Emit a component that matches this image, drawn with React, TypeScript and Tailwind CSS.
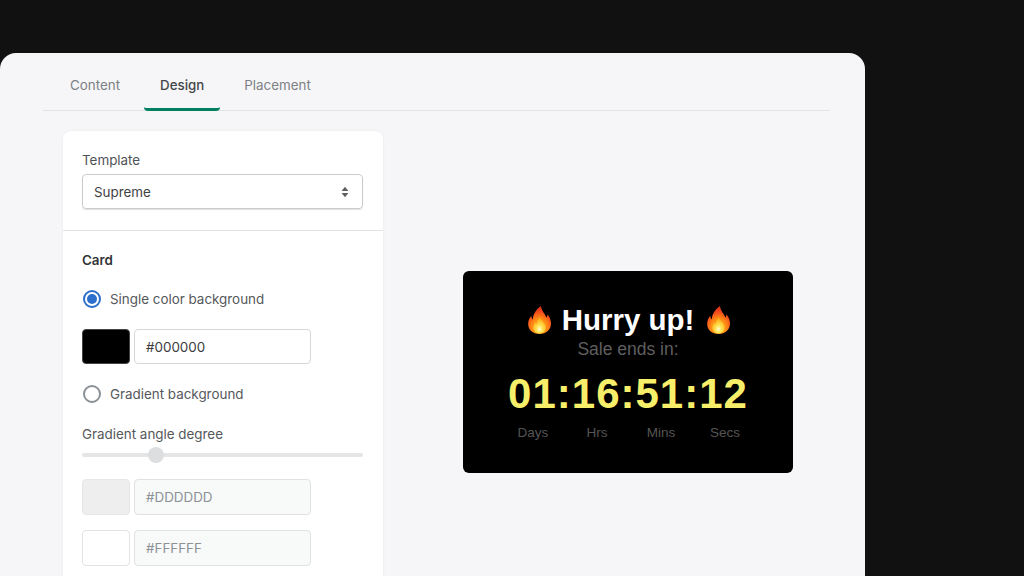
import React from 'react';

const Flame: React.FC<{ id: string; className?: string }> = ({ id, className }) => (
  <svg width="25" height="30" viewBox="0 0 26 30" preserveAspectRatio="none" className={`shrink-0 ${className ?? ''}`}>
    <defs>
      <radialGradient id={`${id}-outer`} cx="50%" cy="78%" r="75%">
        <stop offset="0%" stopColor="#ffc21f" />
        <stop offset="45%" stopColor="#ff8a14" />
        <stop offset="78%" stopColor="#f1471c" />
        <stop offset="100%" stopColor="#d92d17" />
      </radialGradient>
      <radialGradient id={`${id}-core`} cx="50%" cy="72%" r="60%">
        <stop offset="0%" stopColor="#fffde0" />
        <stop offset="35%" stopColor="#ffe65a" />
        <stop offset="100%" stopColor="#ffb21a" />
      </radialGradient>
    </defs>
    <path
      d="M14.5 1C15 4.8 16.6 6.6 18.6 9.4C19.4 10.6 19.8 11.6 20 12.6C21 11.8 21.4 10.6 21.2 9.2C23.8 12 25 15.2 25 18.6C25 25 20 29 13 29C6 29 1.2 25 1.2 18.8C1.2 15.6 2.4 13.2 4.6 10.8C4.6 12.4 5 13.6 6 14.6C6.2 9 9.6 4.2 14.5 1Z"
      fill={`url(#${id}-outer)`}
    />
    <path
      d="M13.4 12.5C14 15 16 16 17.6 18C19 19.8 19.6 21.2 19.4 23C19 26.4 16.4 28.4 13 28.4C9.6 28.4 6.8 26.2 6.6 23C6.4 20.6 7.6 18.8 9 17.6C9.2 18.6 9.6 19.2 10.2 19.6C10.2 16.8 11.4 14.4 13.4 12.5Z"
      fill={`url(#${id}-core)`}
    />
  </svg>
);

const ColorRow = ({
  swatch,
  value,
  disabled,
  height = 'h-9',
}: {
  swatch: string;
  value: string;
  disabled?: boolean;
  height?: string;
}) => (
  <div className="flex gap-1">
    <div className={`w-12 rounded border ${height} ${swatch}`} />
    <div
      className={`w-[177px] rounded border flex items-center pt-px px-[11px] ${height} ${
        disabled ? 'bg-[#f8f9f9] border-[#dfe1e3] text-[#8c9196]' : 'bg-white border-[#d5d7da] text-[#3a3b3d]'
      }`}
    >
      {value}
    </div>
  </div>
);

const Radio = ({ checked, label }: { checked?: boolean; label: string }) => (
  <div className="flex items-center gap-[9px] h-[18px] text-[#55585b]">
    {checked ? (
      <div className="w-[18px] h-[18px] ml-px rounded-full border-2 border-[#2c6ecb] flex items-center justify-center">
        <div className="w-2.5 h-2.5 rounded-full bg-[#2c6ecb]" />
      </div>
    ) : (
      <div className="w-[18px] h-[18px] ml-px rounded-full border-2 border-[#8c9196] bg-white" />
    )}
    <span>{label}</span>
  </div>
);

export default function App() {
  return (
    <div className="w-[1024px] h-[576px] overflow-hidden bg-[#111111] pt-[53px] text-[13.4px] font-['Inter',sans-serif]">
      <div className="w-[865px] h-[523px] overflow-hidden bg-[#f6f6f8] rounded-t-2xl">
        {/* tabs */}
        <div className="ml-[43px] w-[787px] h-[58px] border-b border-[#e1e3e5] pl-[11px] flex gap-2 leading-5">
          <div className="px-4 pt-[22px] text-[#7d8185]">Content</div>
          <div className="px-4 pt-[22px] text-[13.3px] font-medium text-[#44474a] h-[58px] border-b-[3px] border-[#008060] rounded-b-sm">
            Design
          </div>
          <div className="px-4 pt-[22px] text-[#7d8185]">Placement</div>
        </div>

        <div className="flex pl-[63px] pt-5">
          {/* settings card */}
          <div className="w-80 h-[500px] shrink-0 bg-white rounded-lg shadow-[0_0_3px_rgba(0,0,0,0.06)]">
            <div className="pl-[19px] pr-5 pt-[19px] pb-[21px] border-b border-[#e1e3e5]">
              <div className="text-[#4f5255] leading-5">Template</div>
              <div className="mt-1 h-[35px] rounded border border-[#c9cccf] shadow-[0_1px_1px_rgba(0,0,0,0.12)] flex items-center justify-between pt-px pl-[11px] pr-[13px] text-[#3f4245]">
                <span>Supreme</span>
                <svg width="8" height="12" viewBox="0 0 8 12" fill="#5c5f62">
                  <path d="M4 .8 7.4 5H.6Z" />
                  <path d="M4 11.2 7.4 7H.6Z" />
                </svg>
              </div>
            </div>
            <div className="pl-[19px] pr-5 pt-[19px]">
              <div className="font-semibold leading-5 text-[#333538]">Card</div>
              <div className="mt-5">
                <Radio checked label="Single color background" />
              </div>
              <div className="mt-[21px]">
                <ColorRow swatch="bg-black border-[#444]" value="#000000" height="h-[35px]" />
              </div>
              <div className="mt-[21px]">
                <Radio label="Gradient background" />
              </div>
              <div className="mt-[21px] leading-5 text-[#55585b]">Gradient angle degree</div>
              <div className="-mt-px h-6 flex items-center">
                <div className="relative w-[281px] h-1 rounded-full bg-[#e4e5e7]">
                  <div className="absolute left-[66px] -top-1.5 w-4 h-4 rounded-full bg-[#dcdee0]" />
                </div>
              </div>
              <div className="mt-3 flex flex-col gap-[15px]">
                <ColorRow swatch="bg-[#eeeeee] border-[#e6e6e6]" value="#DDDDDD" disabled />
                <ColorRow swatch="bg-white border-[#e1e3e5]" value="#FFFFFF" disabled />
              </div>
            </div>
          </div>

          {/* countdown preview */}
          <div className="ml-20 mt-[140px] w-[330px] h-[202px] shrink-0 bg-black rounded-md flex flex-col items-center pt-[29px] font-['Liberation_Sans',Arial,sans-serif]">
            <div className="flex items-center ml-[2px] h-10 text-[29.5px] font-bold text-white">
              <Flame id="flame-left" className="mr-2.5" />
              <span>Hurry up!</span>
              <Flame id="flame-right" className="ml-3" />
            </div>
            <div className="text-[17.5px] leading-[20px] text-[#5f5f5f] -mt-[1px]">Sale ends in:</div>
            <div className="mt-2.5 text-[42px] leading-[50px] tracking-[1px] font-bold text-[#f7ee6a]">01:16:51:12</div>
            <div className="mt-1 ml-[2px] w-64 grid grid-cols-4 text-[13.5px] leading-5 text-center text-[#555555]">
              <span>Days</span>
              <span>Hrs</span>
              <span>Mins</span>
              <span>Secs</span>
            </div>
          </div>
        </div>
      </div>
    </div>
  );
}
